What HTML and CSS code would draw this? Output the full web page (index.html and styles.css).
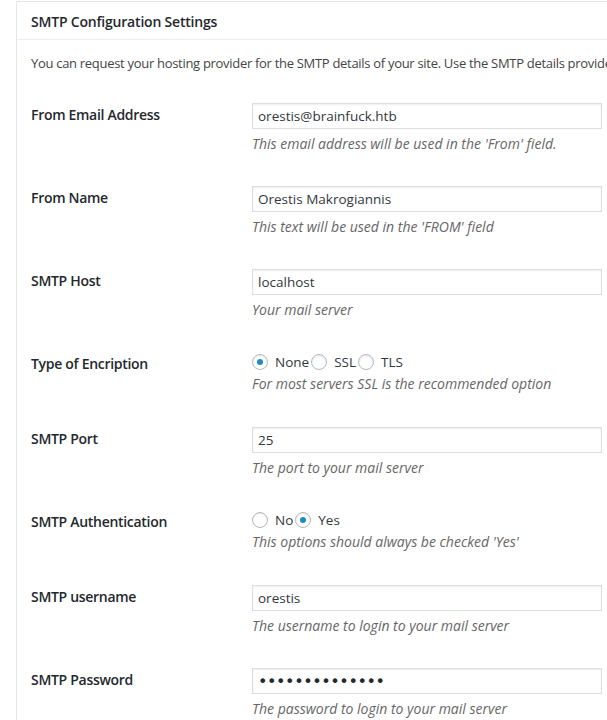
FILE: index.html
```html
<!DOCTYPE html>
<html>
<head>
<meta charset="utf-8">
<link rel="stylesheet" href="styles.css">
</head>
<body>
<div class="panel">
  <h3 class="panel-title">SMTP Configuration Settings</h3>
  <div class="panel-body">
    <p class="intro">You can request your hosting provider for the SMTP details of your site. Use the SMTP details provided by your hosting provider to configure the following settings.</p>
    <div class="form">
      <div class="row">
        <div class="label">From Email Address</div>
        <div class="field">
          <input class="text" type="text" value="orestis@brainfuck.htb">
          <p class="desc">This email address will be used in the 'From' field.</p>
        </div>
      </div>
      <div class="row">
        <div class="label">From Name</div>
        <div class="field">
          <input class="text" type="text" value="Orestis Makrogiannis">
          <p class="desc">This text will be used in the 'FROM' field</p>
        </div>
      </div>
      <div class="row">
        <div class="label">SMTP Host</div>
        <div class="field">
          <input class="text" type="text" value="localhost">
          <p class="desc">Your mail server</p>
        </div>
      </div>
      <div class="row radio-row">
        <div class="label">Type of Encription</div>
        <div class="field">
          <div class="radios"><span class="radio checked"></span><span class="opt">None</span><span class="radio"></span><span class="opt">SSL</span><span class="radio"></span><span class="opt">TLS</span></div>
          <p class="desc">For most servers SSL is the recommended option</p>
        </div>
      </div>
      <div class="row">
        <div class="label">SMTP Port</div>
        <div class="field">
          <input class="text" type="text" value="25">
          <p class="desc">The port to your mail server</p>
        </div>
      </div>
      <div class="row radio-row">
        <div class="label">SMTP Authentication</div>
        <div class="field">
          <div class="radios"><span class="radio"></span><span class="opt">No</span><span class="radio checked"></span><span class="opt">Yes</span></div>
          <p class="desc">This options should always be checked 'Yes'</p>
        </div>
      </div>
      <div class="row">
        <div class="label">SMTP username</div>
        <div class="field">
          <input class="text" type="text" value="orestis">
          <p class="desc">The username to login to your mail server</p>
        </div>
      </div>
      <div class="row">
        <div class="label">SMTP Password</div>
        <div class="field">
          <input class="text pw" type="password" value="kHGuERB29DNiNE">
          <p class="desc">The password to login to your mail server</p>
        </div>
      </div>
    </div>
  </div>
</div>
</body>
</html>
```

FILE: styles.css
```css
html, body {
  margin: 0;
  padding: 0;
  background: #fff;
  overflow: hidden;
}
body {
  font-family: "Open Sans", "Noto Sans", sans-serif;
  font-size: 13px;
  color: #444;
  width: 607px;
}
.panel {
  margin: 1px 0 0 16px;
  border-top: 1px solid #e5e5e5;
  border-left: 1px solid #e5e5e5;
  width: 900px;
}
.panel-title {
  margin: 0;
  height: 37px;
  line-height: 39px;
  padding-left: 14px;
  font-size: 14px;
  font-weight: 600;
  letter-spacing: -0.2px;
  color: #23282d;
  border-bottom: 1px solid #eee;
}
.panel-body {
  padding-left: 14px;
}
.intro {
  margin: 0;
  padding-top: 13px;
  line-height: 20px;
  white-space: nowrap;
  height: 20px;
  padding-bottom: 14px;
  letter-spacing: -0.3px;
  color: #444;
}
.row {
  display: grid;
  grid-template-columns: 221px 350px;
  height: 83px;
  box-sizing: border-box;
}
.radio-row {
  height: 75px;
}
.label {
  padding-top: 19px;
  line-height: 18px;
  font-size: 14px;
  font-weight: 600;
  letter-spacing: -0.3px;
  color: #23282d;
}
.field {
  padding-top: 16px;
}
.text {
  display: block;
  box-sizing: border-box;
  width: 350px;
  height: 26px;
  margin: 0;
  padding: 0 5px;
  border: 1px solid #ddd;
  box-shadow: inset 0 1px 2px rgba(0,0,0,0.07);
  background: #fff;
  font-family: inherit;
  font-size: 13.5px;
  color: #32373c;
  outline: none;
}
.pw {
  font-family: "DejaVu Sans", sans-serif;
  font-size: 16px;
  letter-spacing: -0.4px;
  color: #23282d;
}
.desc {
  margin: 5px 0 0;
  line-height: 20px;
  font-size: 14px;
  font-style: italic;
  color: #666;
}
.radios {
  display: flex;
  align-items: center;
  height: 19px;
  font-size: 13.5px;
  color: #32373c;
}
.radio {
  width: 14px;
  height: 14px;
  border: 1px solid #b4b9be;
  border-radius: 50%;
  box-shadow: inset 0 1px 2px rgba(0,0,0,0.1);
  background: #fff;
  display: flex;
  align-items: center;
  justify-content: center;
  flex: none;
}
.radio.checked::before {
  content: "";
  width: 6px;
  height: 6px;
  border-radius: 50%;
  background: #1e8cbe;
}
.opt {
  margin-left: 7px;
  margin-right: 2px;
}
.radio-row .desc {
  margin-top: 3px;
}
```
